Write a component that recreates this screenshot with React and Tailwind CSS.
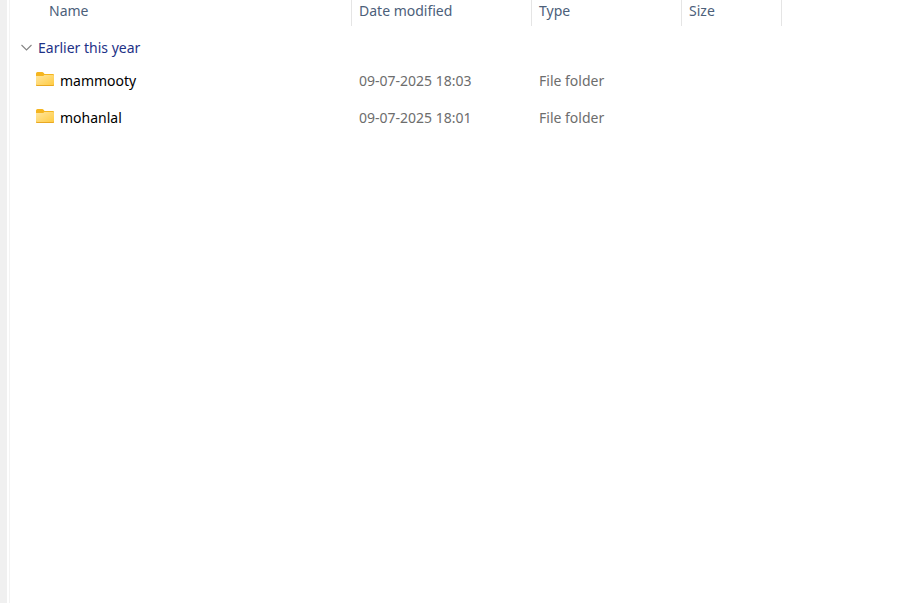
const folders = [
  { name: "mammooty", modified: "09-07-2025 18:03", type: "File folder" },
  { name: "mohanlal", modified: "09-07-2025 18:01", type: "File folder" },
];

function FolderIcon() {
  return (
    <svg width="19" height="17" viewBox="0 0 19 17" aria-hidden="true" className="shrink-0">
      <defs>
        <linearGradient id="folder-front" x1="0" y1="0" x2="1" y2="1">
          <stop offset="0" stopColor="#ffe6a0" />
          <stop offset="1" stopColor="#ffca3e" />
        </linearGradient>
      </defs>
      <path d="M0 1.5Q0 0 1.5 0H6.2Q7 0 7.6 .7L8.5 2H17Q18 2 18 3V6H0Z" fill="#f5b51f" />
      <path d="M0 4H6.6Q7.3 4 7.8 3.5L8.3 3H17Q18 3 18 4V13Q18 14 17 14H1Q0 14 0 13Z" fill="url(#folder-front)" />
      <path d="M0 12.6Q.3 13 1 13H17Q17.7 13 18 12.6V13Q18 14 17 14H1Q0 14 0 13Z" fill="#e9a822" />
    </svg>
  );
}

function Chevron() {
  return (
    <svg width="12" height="8" viewBox="0 0 12 8" fill="none" stroke="#858585" aria-hidden="true">
      <path d="M.5 1L5.5 6L10.5 1" strokeWidth="1.1" />
    </svg>
  );
}

export default function App() {
  return (
    <div className="flex min-h-screen bg-white font-['Segoe_UI','Noto_Sans',sans-serif] text-sm text-[#6d6d6d]">
      <div className="w-[7px] shrink-0 bg-[#f0f0f0]" />
      <main className="ml-0.5 min-w-0 flex-1 border-l border-[#f3f3f3]">
        <table className="w-full table-fixed border-separate border-spacing-0 text-left">
          <colgroup>
            <col className="w-[342px]" />
            <col className="w-[180px]" />
            <col className="w-[150px]" />
            <col className="w-[100px]" />
            <col />
          </colgroup>
          <thead className="text-[#4c607a]">
            <tr className="h-[26px] leading-[22px]">
              <th className="border-r border-[#e5e5e5] p-0 pl-[39px] align-top font-normal">Name</th>
              <th className="border-r border-[#e5e5e5] p-0 pl-[7px] align-top font-normal">Date modified</th>
              <th className="border-r border-[#e5e5e5] p-0 pl-[7px] align-top font-normal">Type</th>
              <th className="border-r border-[#e5e5e5] p-0 pl-[7px] align-top font-normal">Size</th>
              <td className="p-0" />
            </tr>
          </thead>
          <tbody>
            <tr className="h-9">
              <th colSpan="5" className="p-0 pt-2 pl-[11px] font-normal">
                <button type="button" className="flex items-center gap-[5px] leading-7 text-[#1e3287]">
                  <Chevron />
                  Earlier this year
                </button>
              </th>
            </tr>
            {folders.map((folder) => (
              <tr key={folder.name} className="h-[37px]">
                <td className="p-0 pl-[26px] text-black">
                  <div className="flex items-center gap-[5px]">
                    <FolderIcon />
                    {folder.name}
                  </div>
                </td>
                <td className="p-0 pl-[7px]">{folder.modified}</td>
                <td className="p-0 pl-[7px]">{folder.type}</td>
                <td className="p-0" />
                <td className="p-0" />
              </tr>
            ))}
          </tbody>
        </table>
      </main>
    </div>
  );
}
